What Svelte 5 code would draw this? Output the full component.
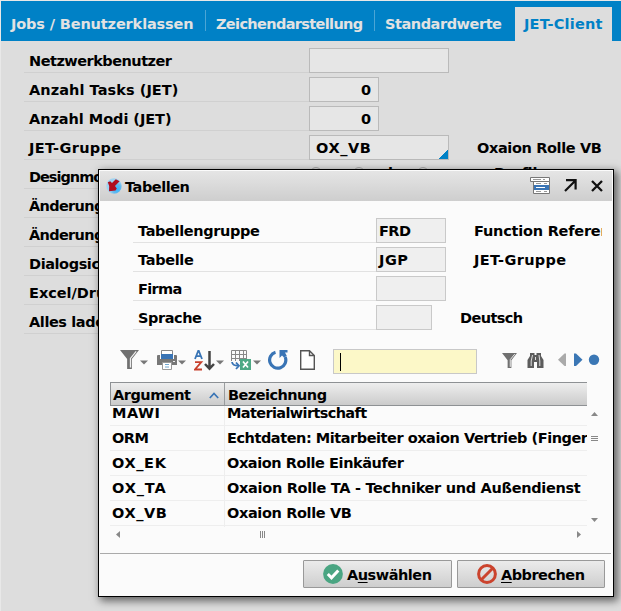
<script>
  const tabs = [
    { name: 'Jobs / Benutzerklassen', w: 182, box: 205 },
    { name: 'Zeichendarstellung', w: 146, box: 169 },
    { name: 'Standardwerte', w: 116, box: 140 },
    { name: 'JET-Client', w: 78, box: 97, active: true },
  ];
  const settings = [
    { label: 'Netzwerkbenutzer', w: 142, field: 'wide' },
    { label: 'Anzahl Tasks (JET)', w: 149, field: 'num', value: '0', vw: 9 },
    { label: 'Anzahl Modi (JET)', w: 142, field: 'num', value: '0', vw: 9 },
    { label: 'JET-Gruppe', w: 92, field: 'wide', value: 'OX_VB', vw: 55, lookup: true, note: 'Oxaion Rolle VB', nw: 124 },
    { label: 'Designmodus', w: 99, radios: true },
    { label: 'Änderungen', w: 93 },
    { label: 'Änderungen', w: 93 },
    { label: 'Dialogsicherung', w: 126 },
    { label: 'Excel/Druck', w: 95 },
    { label: 'Alles laden', w: 85 },
  ];
  const filters = [
    { label: 'Tabellengruppe', w: 121, value: 'FRD', vw: 31, note: 'Function Reference', nw: 154 },
    { label: 'Tabelle', w: 55, value: 'JGP', vw: 29, note: 'JET-Gruppe', nw: 92 },
    { label: 'Firma', w: 43 },
    { label: 'Sprache', w: 63, short: true, note: 'Deutsch', nw: 62 },
  ];
  const rows = [
    { arg: 'MAWI', aw: 48, text: 'Materialwirtschaft', w: 139 },
    { arg: 'ORM', aw: 36, text: 'Echtdaten: Mitarbeiter oxaion Vertrieb (Finger', w: 360 },
    { arg: 'OX_EK', aw: 54, text: 'Oxaion Rolle Einkäufer', w: 176 },
    { arg: 'OX_TA', aw: 54, text: 'Oxaion Rolle TA - Techniker und Außendienst', w: 353 },
    { arg: 'OX_VB', aw: 55, text: 'Oxaion Rolle VB', w: 124 },
  ];

  // Spreads a label's letters so that it fills the given width.
  function fit(node, width) {
    const n = node.textContent.length;
    const natural = node.getBoundingClientRect().width;
    if (n > 1) node.style.letterSpacing = `${(width + 0.5 - natural) / n}px`;
  }
</script>

{#snippet t(text, w)}<span class="t" use:fit={w}>{text}</span>{/snippet}

{#snippet funnel(size)}
  <svg width={size} height={size} viewBox="0 0 20 20">
    <path d="M0 0H20L12.5 9.5V20H7.5V9.5Z" fill="#707070" />
    <path d="M17 1.5L11 8.8V18.5" fill="none" stroke="#eee" stroke-width="1.3" />
  </svg>
{/snippet}

{#snippet drop()}<svg class="drop" width="8" height="5" viewBox="0 0 8 5"><path d="M0 .5H8L4 4.5Z" fill="#777" /></svg>{/snippet}

<div class="app">
  <nav>
    {#each tabs as tab}
      <div class="tab" class:active={tab.active} style:width="{tab.box}px">{@render t(tab.name, tab.w)}</div>
    {/each}
  </nav>

  <div class="form">
    {#each settings as s}
      <div class="row">
        <div class="label">{@render t(s.label, s.w)}</div>
        {#if s.field}
          <div class="field {s.field}">
            {#if s.value}{@render t(s.value, s.vw)}{/if}
            {#if s.lookup}<i class="corner"></i>{/if}
          </div>
        {/if}
        {#if s.radios}
          <div class="radios"><i></i><i></i><b>l</b><i></i><em>Profil</em></div>
        {/if}
        {#if s.note}<div class="note">{@render t(s.note, s.nw)}</div>{/if}
      </div>
    {/each}
  </div>

  <section class="dialog">
    <header>
      <svg width="16" height="16" viewBox="0 0 16 16">
        <defs><radialGradient id="orb" cx=".7" cy=".7"><stop offset="0" stop-color="#35b5ff" /><stop offset=".6" stop-color="#65b9ed" /><stop offset="1" stop-color="#a0d4f2" /></radialGradient></defs>
        <circle cx="8" cy="8" r="7.7" fill="url(#orb)" />
        <path d="M1.8 4.2L4.2 3.2L6 5L9.8 1.2L13.6 3.2L9 8L10.8 10.5L9.5 12.5L3 13.2L3.2 8Z" fill="#b00e20" />
      </svg>
      <h1>{@render t('Tabellen', 64)}</h1>
      <svg class="h-list" width="20" height="17" viewBox="0 0 20 17">
        <path d="M3.5 3.5H19.5V16.5H3.5Z" fill="#fff" stroke="#777" />
        <path d="M.5 .5H19.5V4.5H.5Z" fill="#fff" stroke="#777" />
        <path d="M3 2.5H11M13 2.5H15M6 6.5H11M14 6.5H17M6 14.5H11M14 14.5H17" stroke="#999" />
        <path d="M4 8H19V13H4Z" fill="#3974b5" /><path d="M6 10.5H15" stroke="#fff" />
      </svg>
      <svg class="h-open" width="13" height="13" viewBox="0 0 13 13"><path d="M1 12L11 2M2 1.2H11.6V10.5" fill="none" stroke="#111" stroke-width="2.2" /></svg>
      <svg class="h-close" width="12" height="12" viewBox="0 0 12 12"><path d="M1 1L11 11M11 1L1 11" stroke="#111" stroke-width="2.3" /></svg>
    </header>

    <div class="filters">
      {#each filters as f}
        <div class="row">
          <div class="label">{@render t(f.label, f.w)}</div>
          <div class="field" class:short={f.short}>{#if f.value}{@render t(f.value, f.vw)}{/if}</div>
          {#if f.note}<div class="note">{@render t(f.note, f.nw)}</div>{/if}
        </div>
      {/each}
    </div>

    <div class="tools">
      <div class="tool">{@render funnel(19)}{@render drop()}</div>
      <div class="tool">
        <svg width="20" height="20" viewBox="0 0 20 20">
          <path d="M4.5 .5H15.5V9H4.5Z" fill="#fff" stroke="#888" />
          <path d="M0 6Q0 5 1 5H3V9H17V5H19Q20 5 20 6V15H0Z" fill="#777" />
          <path d="M4 4H16V9H4Z" fill="#3974b5" /><path d="M16 11.5H18" stroke="#eee" />
          <path d="M5.5 12.5H14.5V19.5H5.5Z" fill="#fff" stroke="#999" /><path d="M8 14.5H12M8 17H12" stroke="#70a6cf" />
        </svg>{@render drop()}
      </div>
      <div class="tool">
        <svg width="21" height="21" viewBox="0 0 21 21">
          <path d="M1 9L4.2 1H4.8L8 9M2.2 6.2H6.8" fill="none" stroke="#3974b5" stroke-width="1.8" />
          <path d="M1 12.2H7.3L1 19.5H8" fill="none" stroke="#c8402c" stroke-width="1.8" />
          <path d="M15.5 1V18M11 14L15.5 18.7L20 14" fill="none" stroke="#444" stroke-width="2.5" />
        </svg>{@render drop()}
      </div>
      <div class="tool">
        <svg width="21" height="21" viewBox="0 0 21 21">
          <path d="M.5 11V.5H15.5V9M.5 4.5H15.5M.5 8.5H15.5M4.5 .5V11M8.5 .5V11M12.5 .5V9" fill="none" stroke="#888" />
          <path d="M1 12Q1.5 15.8 7.5 15.8M5 12.5L8 15.8L5 19" fill="none" stroke="#3974b5" stroke-width="1.8" />
          <path d="M9 9H20V20H9Z" fill="#4da985" /><path d="M12 11.5L17 17.5M17 11.5L12 17.5" stroke="#fff" stroke-width="1.7" />
        </svg>{@render drop()}
      </div>
      <svg class="reload" width="20" height="20" viewBox="0 0 20 20"><path d="M7.5 2.3A8.1 8.1 0 1 0 17.2 7" fill="none" stroke="#3974b5" stroke-width="3.2" /><path d="M11.5 0H19.5V2.5H17L18.8 6L16 7.5L14 5.5L11.5 8Z" fill="#3974b5" /></svg>
      <svg class="page" width="15" height="20" viewBox="0 0 15 20"><path d="M.7 .7H9.5L14.3 5.5V19.3H.7ZM9.5 .7V5.5H14.3" fill="#fff" stroke="#555" stroke-width="1.4" /></svg>
      <div class="search"><i></i></div>
      <div class="find">{@render funnel(15)}</div>
      <svg class="bino" width="17" height="17" viewBox="0 0 17 17">
        <path d="M3 1H7.5V3H9.5V1H14V4L16.5 8V16H10V10H7V16H.5V8L3 4Z" fill="#5c5c5c" />
        <path d="M5.5 3L4.2 9V14M12 3L12.8 9V14M8.5 5V8" fill="none" stroke="#ddd" />
      </svg>
      <svg class="nav" width="43" height="14" viewBox="0 0 43 14">
        <path d="M9 .5V13H7.5L1 6.8L7.5 .5Z" fill="#aaa" /><path d="M17 .5H19L25.5 6.8L19 13H17Z" fill="#3b77b5" /><circle cx="37" cy="6.8" r="5.2" fill="#3b77b5" />
      </svg>
    </div>

    <div class="grid">
      <div class="table">
        <div class="thead">
          <div class="c1">{@render t('Argument', 77)}
            <svg width="10" height="7" viewBox="0 0 10 7"><path d="M.8 6L5 1.5L9.2 6" fill="none" stroke="#3974b5" stroke-width="1.7" /></svg>
          </div>
          <div class="c2">{@render t('Bezeichnung', 98)}</div>
        </div>
        <div class="tbody">
          {#each rows as r}
            <div class="tr"><div class="c1">{@render t(r.arg, r.aw)}</div><div class="c2">{@render t(r.text, r.w)}</div></div>
          {/each}
        </div>
      </div>
      <div class="vbar">
        <svg width="7" height="4" viewBox="0 0 7 4"><path d="M0 4H7L3.5 0Z" fill="#888" /></svg>
        <svg width="7" height="5" viewBox="0 0 7 5"><path d="M0 .5H7M0 2.5H7M0 4.5H7" stroke="#888" /></svg>
        <svg width="7" height="4" viewBox="0 0 7 4"><path d="M0 0H7L3.5 4Z" fill="#888" /></svg>
      </div>
    </div>
    <div class="hbar">
      <svg width="4" height="7" viewBox="0 0 4 7"><path d="M4 0V7L0 3.5Z" fill="#888" /></svg>
      <svg width="5" height="7" viewBox="0 0 5 7"><path d="M.5 0V7M2.5 0V7M4.5 0V7" stroke="#888" /></svg>
      <svg width="4" height="7" viewBox="0 0 4 7"><path d="M0 0V7L4 3.5Z" fill="#888" /></svg>
    </div>

    <footer>
      <button>
        <svg width="20" height="20" viewBox="0 0 20 20"><circle cx="10" cy="10" r="9.9" fill="#4aa582" /><path d="M4.8 10L8.5 13.8L15.3 6.5" fill="none" stroke="#fff" stroke-width="3" /></svg>
        <span class="t" use:fit={84}>A<u>u</u>swählen</span>
      </button>
      <button>
        <svg width="20" height="20" viewBox="0 0 20 20"><circle cx="10" cy="10" r="8.4" fill="none" stroke="#cb432d" stroke-width="3" /><path d="M4.3 15.7L15.7 4.3" stroke="#cb432d" stroke-width="3" /></svg>
        <span class="t" use:fit={83}><u>A</u>bbrechen</span>
      </button>
    </footer>
  </section>
</div>

<style>
  :global(body) { overflow: hidden; }
  * { box-sizing: border-box; }
  .app {
    position: relative; width: 621px; height: 611px; overflow: hidden;
    background: #ddd; border-top: 1px solid #e8e8e8; border-left: 1px solid #e8e8e8;
    font: bold 14.5px/20px "DejaVu Sans", Verdana, sans-serif; color: #000;
  }
  svg { display: block; flex: none; }
  .t { white-space: pre; display: inline-block; flex: none; }
  nav { display: flex; height: 40px; background: #0081c6; color: #e2e2e2; }
  .tab { position: relative; height: 40px; padding: 13px 0 0 10px; flex: none; }
  .tab:nth-child(-n+2)::after { content: ''; position: absolute; right: 0; top: 9px; height: 21px; width: 1px; background: #4ba5d5; }
  .tab.active { margin-top: 6px; height: 34px; padding: 7px 0 0 9px; background: #ddd; color: #0081c6; }
  .form { padding: 7px 0 0 23px; }
  .row { display: flex; height: 25px; margin-bottom: 4px; }
  .form .label { width: 285px; padding: 3px 0 0 5px; border-bottom: 1px solid #d0d0d0; flex: none; }
  .field { border: 1px solid #bababa; background: #e6e6e6; padding: 2px 6px 0; flex: none; }
  .wide { width: 140px; position: relative; }
  .num { width: 70px; text-align: right; padding-right: 7px; }
  .corner { position: absolute; right: 0; bottom: 0; width: 9px; height: 9px; background: linear-gradient(135deg, transparent 50%, #0081c6 50%); }
  .form .note { padding: 3px 0 0 28px; }
  .radios { display: flex; padding-left: 1px; }
  .radios i { width: 12px; height: 12px; margin: 3px 31px 0 0; border: 1px solid #aaa; border-radius: 50%; flex: none; }
  .radios b { width: 6px; margin: -1px 23px 0 -8px; }
  .radios em { margin: -1px 0 0 34px; font-style: normal; }

  .dialog {
    position: absolute; left: 97px; top: 168px; width: 516px; height: 428px;
    border: 1px solid #000; background: #fbfbfb; box-shadow: 3px 3px 8px 1px rgba(0, 0, 0, .55);
    padding: 1px;
  }
  header { display: flex; height: 30px; background: linear-gradient(#e5e5e5, #cecece); padding: 7px 0 0 6px; }
  h1 { font: inherit; margin: -1px 0 0 3px; width: 405px; }
  .h-list { margin-top: -1px; }
  .h-open { margin: 1px 0 0 14px; }
  .h-close { margin: 2px 0 0 14px; }
  .filters { padding: 17px 10px 0 33px; }
  .filters .row { overflow: hidden; }
  .filters .label { width: 243px; padding: 3px 0 0 5px; border-bottom: 1px solid #e2e2e2; flex: none; }
  .filters .field { width: 70px; background: #efefef; border-color: #c9c9c9; padding: 2px; }
  .filters .field.short { width: 56px; }
  .filters .note { padding: 3px 0 0 28px; overflow: hidden; min-width: 0; }

  .tools { display: flex; height: 25px; margin-top: 19px; padding-left: 20px; }
  .tool { display: flex; width: 37px; padding-top: 1px; flex: none; }
  .drop { margin: 10px 0 0 1px; }
  .reload { margin: 1px 0 0; }
  .page { margin: 1px 0 0 12px; }
  .search { width: 144px; height: 25px; margin-left: 18px; border: 1px solid #c8c8c8; background: #fcf8c8; padding: 3px 6px; flex: none; }
  .search i { display: block; width: 1px; height: 18px; background: #000; }
  .find { margin: 4px 0 0 25px; }
  .bino { margin: 3px 0 0 10px; }
  .nav { margin: 4px 0 0 13px; }

  .grid { display: flex; margin: 8px 0 0 10px; }
  .table { width: 477px; }
  .thead { display: flex; height: 24px; border: solid #8e9194; border-width: 1px 0 1px 1px; background: linear-gradient(#eee, #cbcbcb); }
  .thead .c1 { display: flex; width: 114px; padding: 2px 0 0 2px; border-right: 1px solid #999c9e; }
  .thead .c1 svg { margin: 7px 0 0 18px; }
  .thead .c2 { padding: 2px 0 0 3px; }
  .tbody { height: 121px; overflow: hidden; background: linear-gradient(#eee, #eee) 114px 0 / 1px 100% no-repeat; }
  .tr { display: flex; height: 25px; border-bottom: 1px solid #eee; }
  .tr .c1 { width: 117px; padding: 2px 0 0 2px; flex: none; }
  .tr .c2 { padding-top: 2px; }
  .tr:first-child { margin-top: -5px; }
  .vbar { display: flex; flex-direction: column; justify-content: space-between; padding: 30px 0 5px 4px; height: 145px; }
  .vbar svg:nth-child(2) { margin-top: -57px; }
  .hbar { display: flex; padding: 4px 0 0 16px; height: 26px; }
  .hbar svg:nth-child(2) { margin-left: 140px; }
  .hbar svg:nth-child(3) { margin-left: 312px; }
  footer { display: flex; gap: 5px; border-top: 1px solid #aaa; margin-right: 1px; padding: 6px 0 0 203px; }
  button { display: flex; width: 149px; height: 28px; border: 1px solid #999; border-radius: 1px; background: linear-gradient(#ebebeb, #cecece); font: inherit; color: #000; padding: 3px 0 0 19px; gap: 4px; }
  button:last-child { width: 148px; }
  button .t { margin-top: 1px; }
  u { text-underline-offset: 2px; text-decoration-thickness: 1px; }
</style>
